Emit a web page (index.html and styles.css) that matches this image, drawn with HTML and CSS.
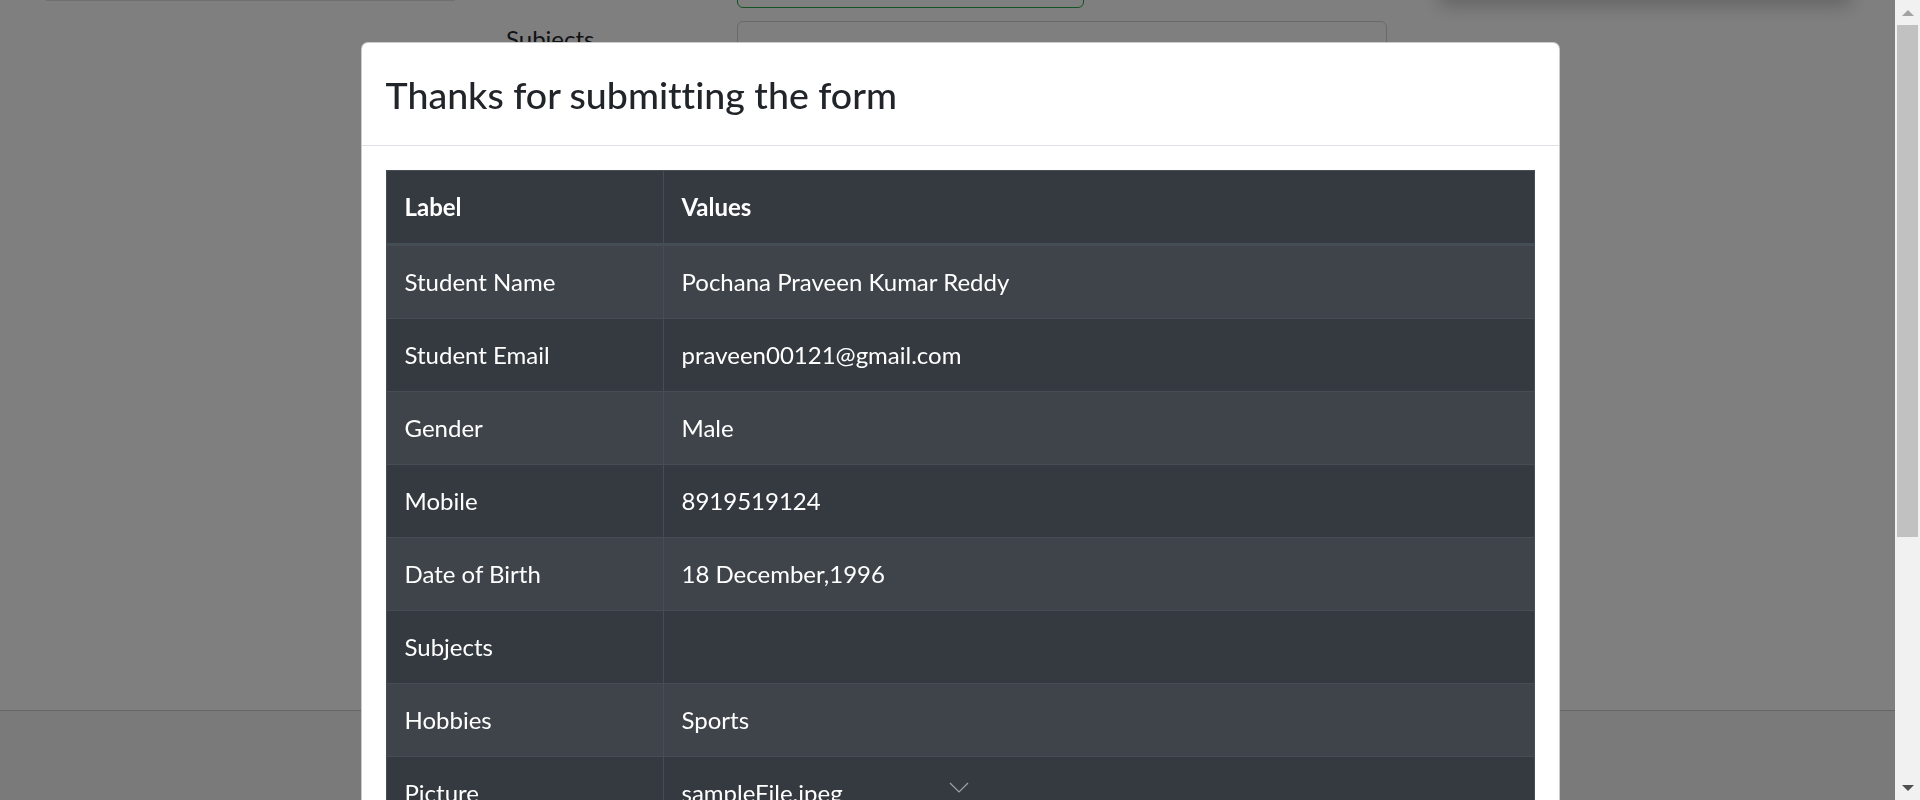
FILE: index.html
```html
<!DOCTYPE html>
<html lang="en">
<head>
<meta charset="utf-8">
<title>Practice Form</title>
<link rel="stylesheet" href="styles.css">
</head>
<body>
<div class="page">
  <div class="bg-top">
    <div class="bg-left"></div>
    <div class="bg-form">
      <div class="bg-row first">
        <span class="bg-label"></span>
        <div class="bg-input valid"></div>
      </div>
      <div class="bg-row">
        <span class="bg-label">Subjects</span>
        <div class="bg-input wide"></div>
      </div>
    </div>
    <div class="bg-card"></div>
  </div>
  <footer class="bg-footer"></footer>
</div>

<div class="overlay">
  <div class="modal">
    <div class="modal-header">
      <div class="modal-title">Thanks for submitting the form</div>
    </div>
    <div class="modal-body">
      <table class="result-table">
        <thead>
          <tr><th class="col-label">Label</th><th>Values</th></tr>
        </thead>
        <tbody>
          <tr><td>Student Name</td><td>Pochana Praveen Kumar Reddy</td></tr>
          <tr><td>Student Email</td><td>praveen00121@gmail.com</td></tr>
          <tr><td>Gender</td><td>Male</td></tr>
          <tr><td>Mobile</td><td>8919519124</td></tr>
          <tr><td>Date of Birth</td><td>18 December,1996</td></tr>
          <tr><td>Subjects</td><td></td></tr>
          <tr><td>Hobbies</td><td>Sports</td></tr>
          <tr><td>Picture</td><td class="pic-cell">sampleFile.jpeg<svg class="chevron" width="20" height="11" viewBox="0 0 20 11"><polyline points="1,1 10,10 19,1" fill="none" stroke="#9ea3a8" stroke-width="1.2"/></svg></td></tr>
          <tr><td>Address</td><td></td></tr>
          <tr><td>State and City</td><td></td></tr>
        </tbody>
      </table>
    </div>
  </div>
</div>

<div class="scrollbar">
  <div class="sb-btn"><span class="tri-up"></span></div>
  <div class="sb-thumb"></div>
  <div class="sb-track"></div>
  <div class="sb-btn"><span class="tri-down"></span></div>
</div>
</body>
</html>
```
FILE: styles.css
```css
* { box-sizing: border-box; }
html, body { margin: 0; padding: 0; }
body {
  width: 1920px;
  height: 800px;
  overflow: hidden;
  font-family: Lato, "Open Sans", "Noto Sans", sans-serif;
  font-variant-ligatures: none;
  color: #212529;
  background: #fff;
}

/* ---------- background page ---------- */
.page {
  width: 1895px;
  height: 800px;
  display: flex;
  flex-direction: column;
  background: #fff;
}
.bg-top {
  display: flex;
  align-items: flex-start;
  margin-top: -100px;
}
.bg-left {
  margin-left: 46px;
  width: 409px;
  height: 101px;
  border-bottom: 1px solid #e0e0e0;
}
.bg-form {
  margin-left: 51px;
  width: 881px;
  display: flex;
  flex-direction: column;
}
.bg-row {
  display: flex;
  align-items: flex-start;
  margin-top: 13px;
}
.bg-row.first { margin-top: 51px; }
.bg-label {
  width: 231px;
  font-size: 24px;
  line-height: 36px;
  color: #212529;
}
.bg-input {
  height: 57px;
  border: 1.5px solid #ced4da;
  border-radius: 6px;
  background: #fff;
}
.bg-input.valid {
  width: 347px;
  border-color: #28a745;
}
.bg-input.wide {
  width: 650px;
}
.bg-card {
  margin-left: 52px;
  width: 412px;
  height: 100px;
  background: #fff;
  box-shadow: 0 6px 18px rgba(0, 0, 0, 0.22);
}
.bg-footer {
  margin-top: auto;
  height: 90px;
  border-top: 1px solid #cdcdcd;
  background: #f5f5f5;
}

/* ---------- overlay + modal ---------- */
.overlay {
  position: fixed;
  inset: 0;
  background: rgba(0, 0, 0, 0.5);
  overflow: hidden;
}
.modal {
  width: 1199px;
  margin: 42px auto 0;
  background: #fff;
  border: 1px solid rgba(0, 0, 0, 0.2);
  border-radius: 7px;
}
.modal-header {
  padding: 25px 24px 23px;
  border-bottom: 1px solid #dee2e6;
}
.modal-title {
  font-size: 37.5px;
  line-height: 54px;
  font-weight: 500;
  color: #212529;
}
.modal-body {
  padding: 24px;
}
.result-table {
  width: 100%;
  border-collapse: collapse;
  background: #343a40;
  color: #fff;
  font-size: 24px;
}
.result-table th,
.result-table td {
  padding: 18px;
  line-height: 36px;
  border: 1px solid #454d55;
  text-align: left;
  vertical-align: top;
}
.result-table th {
  font-weight: 700;
}
.result-table thead th {
  border-bottom: 3px solid #454d55;
}
.result-table .col-label {
  width: 277px;
}
.result-table tbody tr:nth-child(odd) td {
  background: #3e444a;
}
.pic-cell {
  position: relative;
}
.chevron {
  position: absolute;
  left: 285px;
  top: 25px;
}

/* ---------- scrollbar ---------- */
.scrollbar {
  position: fixed;
  top: 0;
  right: 0;
  width: 25px;
  height: 800px;
  background: #f1f1f1;
  display: flex;
  flex-direction: column;
}
.sb-btn {
  height: 25px;
  display: flex;
  align-items: center;
  justify-content: center;
}
.tri-up {
  width: 0;
  height: 0;
  border-left: 6px solid transparent;
  border-right: 6px solid transparent;
  border-bottom: 6px solid #a3a3a3;
}
.tri-down {
  width: 0;
  height: 0;
  border-left: 6px solid transparent;
  border-right: 6px solid transparent;
  border-top: 6px solid #505050;
}
.sb-thumb {
  margin: 0 2px;
  height: 512px;
  background: #c1c1c1;
}
.sb-track {
  flex: 1;
}
```
